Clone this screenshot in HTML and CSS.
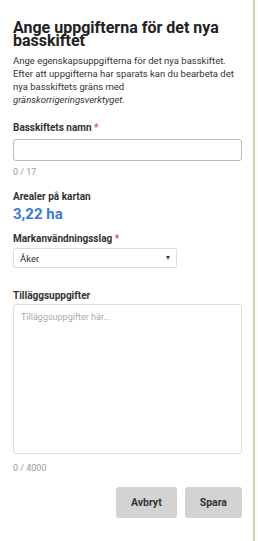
FILE: index.html
```html
<!DOCTYPE html>
<html lang="sv">
  <head>
    <meta charset="UTF-8" />
    <meta name="viewport" content="width=device-width, initial-scale=1.0" />
    <title>Nytt basskifte</title>
    <link rel="stylesheet" href="styles.css">
  </head>
  <body>
    <div class="panel">
      <div class="panel-content">
        <h1 class="panel-title">Ange uppgifterna för det nya basskiftet</h1>
        <p class="panel-intro">
          Ange egenskapsuppgifterna för det nya basskiftet. Efter att
          uppgifterna har sparats kan du bearbeta det nya basskiftets gräns med
          <i>gränskorrigeringsverktyget</i>.
        </p>

        <div class="field">
          <label class="field-label" for="parcelName"
            >Basskiftets namn <span class="required">*</span></label
          >
          <input class="text-input" type="text" id="parcelName" maxlength="17" />
          <div class="counter">0 / 17</div>
        </div>

        <div class="field area-field">
          <div class="field-label">Arealer på kartan</div>
          <div class="area-value">3,22 ha</div>
        </div>

        <div class="field">
          <label class="field-label" for="landUse"
            >Markanvändningsslag <span class="required">*</span></label
          >
          <div class="select-box">
            <span>Åker</span>
            <span class="caret"></span>
          </div>
        </div>

        <div class="field extra-field">
          <label class="field-label" for="extraInfo">Tilläggsuppgifter</label>
          <textarea
            class="text-area"
            id="extraInfo"
            placeholder="Tilläggsuppgifter här..."
            maxlength="4000"
          ></textarea>
          <div class="counter counter-long">0 / 4000</div>
        </div>

        <div class="button-row">
          <button class="panel-button">Avbryt</button>
          <button class="panel-button">Spara</button>
        </div>
      </div>
    </div>
  </body>
</html>
```

FILE: styles.css
```css
body {
  margin: 0;
  background-color: #fcfcfb;
  font-family: Roboto, "Liberation Sans", sans-serif;
  color: #222;
}

.panel {
  width: 255px;
  height: 541px;
  background-color: #fff;
  border-right: 2px solid #d9ceb4;
  box-sizing: border-box;
}
.panel .panel-content {
  padding: 21px 15px 0 13px;
}
.panel .panel-title {
  font-size: 16px;
  font-weight: 700;
  line-height: 13px;
  margin: 0 0 7px 0;
  color: #222;
}
.panel .panel-intro {
  font-size: 9.5px;
  line-height: 13px;
  color: #333;
  margin: 0 0 15px 0;
}
.panel .field-label {
  display: block;
  font-size: 10px;
  font-weight: 700;
  line-height: 14px;
  color: #333;
}
.panel .required {
  color: #d9534f;
}
.panel .text-input {
  display: block;
  box-sizing: border-box;
  width: 229px;
  height: 22px;
  margin-top: 4px;
  border: 1px solid #bbb;
  border-radius: 3px;
  padding: 0 6px;
}
.panel .counter {
  font-size: 9px;
  color: #999;
  margin-top: 5px;
  line-height: 12px;
}
.panel .counter-long {
  margin-top: 8px;
}
.panel .area-field {
  margin-top: 12px;
}
.panel .area-value {
  font-size: 15px;
  font-weight: 700;
  color: #3a7bd5;
  line-height: 20px;
}
.panel .field {
  margin-bottom: 8px;
}
.panel .select-box {
  display: flex;
  justify-content: space-between;
  align-items: center;
  box-sizing: border-box;
  width: 164px;
  height: 20px;
  margin-top: 2px;
  padding: 0 6px;
  border: 1px solid #ddd;
  border-radius: 2px;
  font-size: 9.5px;
  color: #333;
}
.panel .caret {
  width: 0;
  height: 0;
  border-left: 2.5px solid transparent;
  border-right: 2.5px solid transparent;
  border-top: 4px solid #444;
}
.panel .extra-field {
  margin-top: 21px;
}
.panel .text-area {
  display: block;
  box-sizing: border-box;
  width: 229px;
  height: 150px;
  margin-top: 1px;
  border: 1px solid #ddd;
  border-radius: 3px;
  padding: 7px 7px;
  font-family: Roboto, "Liberation Sans", sans-serif;
  font-size: 9px;
  resize: none;
}
.panel .text-area::placeholder {
  color: #aaa;
}
.panel .button-row {
  display: flex;
  justify-content: flex-end;
  gap: 8px;
  margin-top: 13px;
  width: 229px;
}
.panel .panel-button {
  height: 31px;
  padding: 0 15px;
  min-width: 56px;
  border: none;
  border-radius: 3px;
  background-color: #d3d3d3;
  font-family: Roboto, "Liberation Sans", sans-serif;
  font-size: 10.5px;
  font-weight: 700;
  color: #333;
}
```
